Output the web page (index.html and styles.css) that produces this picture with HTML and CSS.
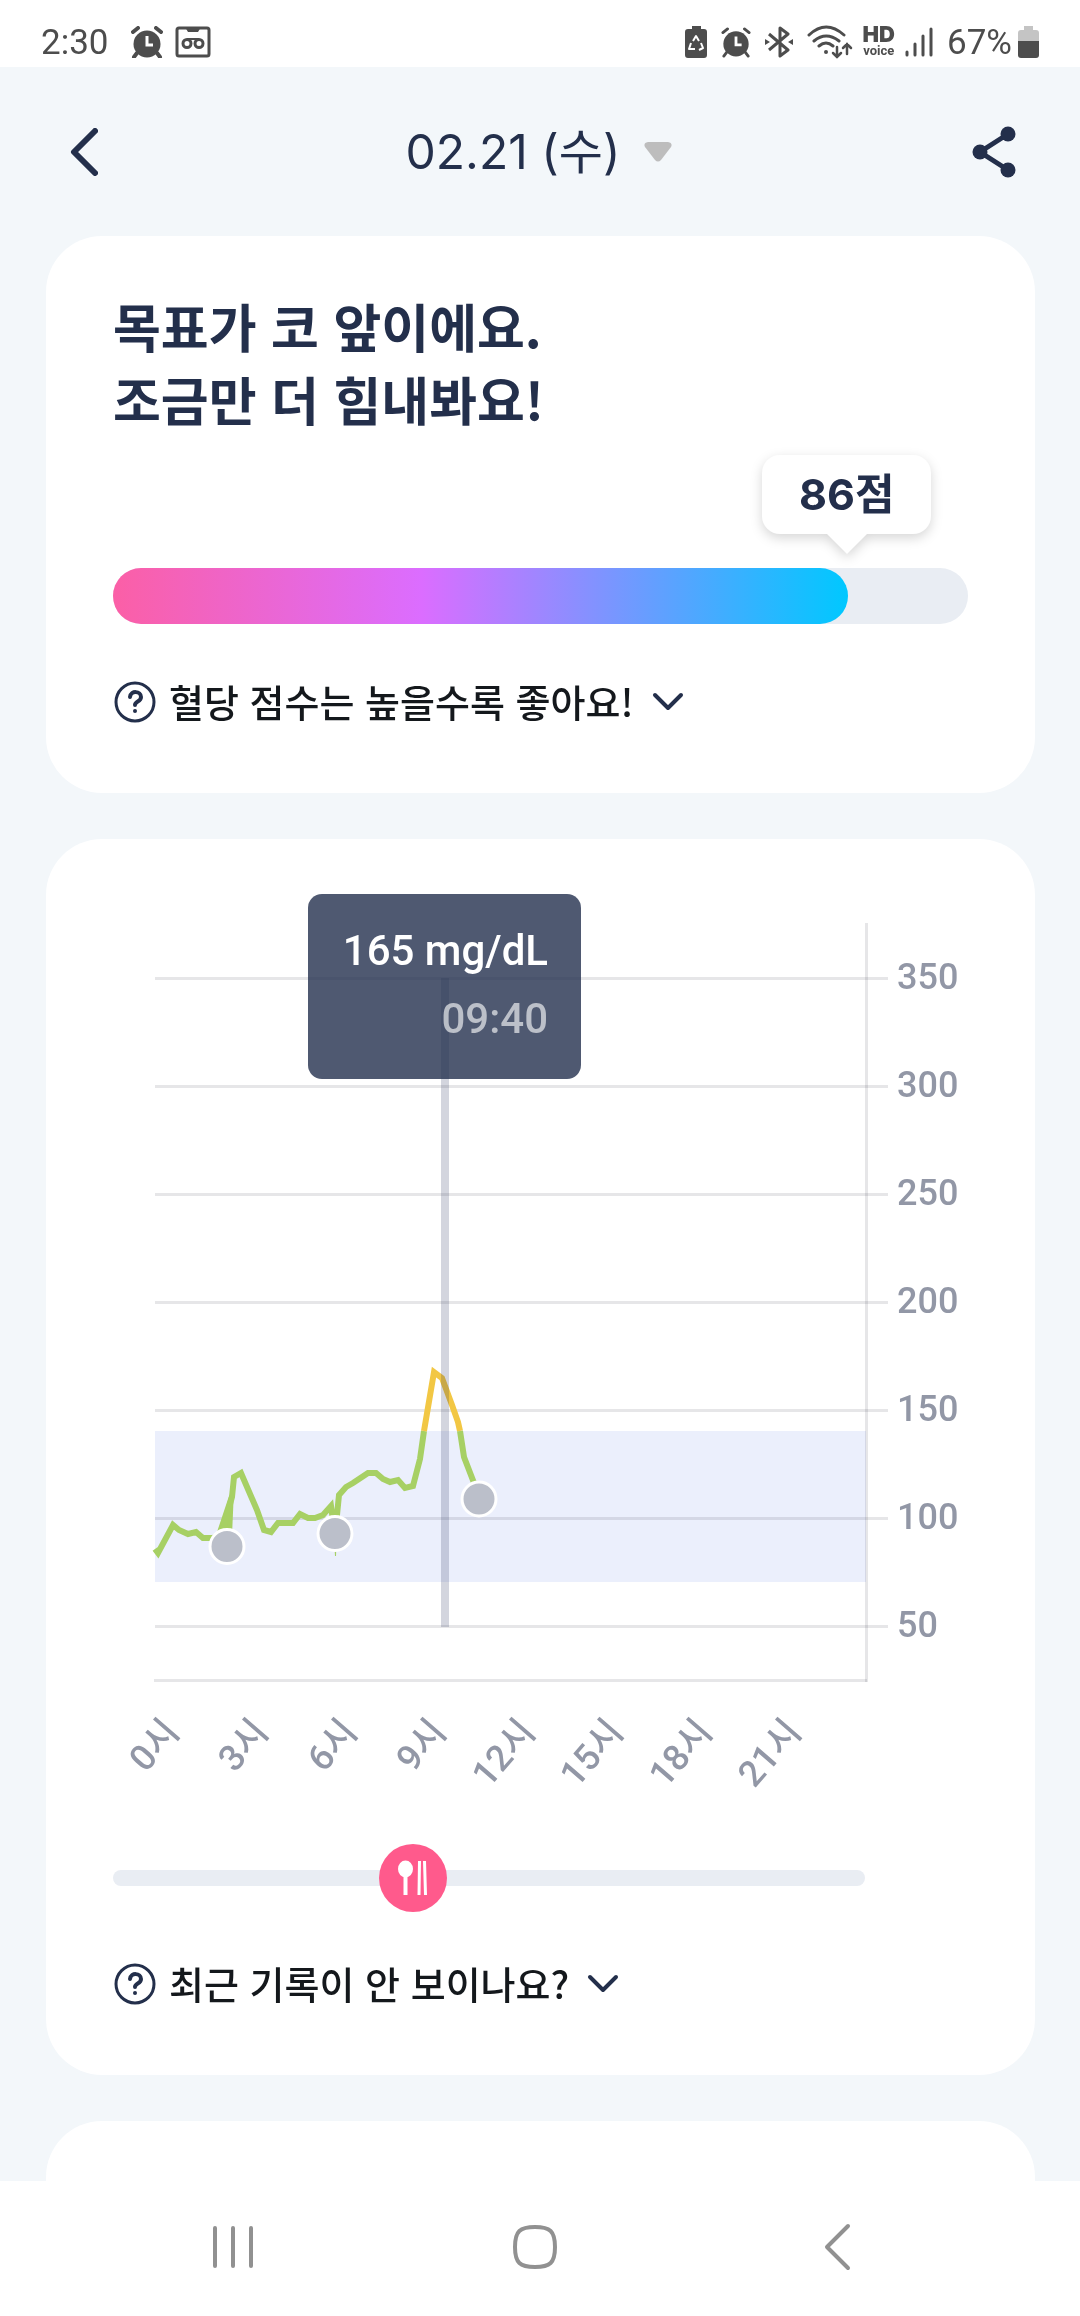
FILE: index.html
```html
<!DOCTYPE html>
<html lang="ko">
<head>
  <meta charset="UTF-8">
  <meta name="viewport" content="width=device-width, initial-scale=1">
  <title>혈당 리포트</title>
  <link rel="stylesheet" href="styles.css">
</head>
<body>

  <div class="status">
    <span class="time">2:30</span>
    <svg class="alarm" width="32" height="32" viewBox="0 0 32 32">
      <circle cx="16" cy="18" r="13.5" fill="#4d4d4d"/>
      <path d="M2 6l5-4M30 6l-5-4M6 27l-3 4M26 27l3 4" stroke="#4d4d4d" stroke-width="4" stroke-linecap="round"/>
      <path d="M16 10v9h6" stroke="#fff" stroke-width="3" fill="none"/>
    </svg>
    <svg width="36" height="32" viewBox="0 0 36 32" fill="none" stroke="#4d4d4d">
      <rect x="2" y="2" width="32" height="28" rx="2" stroke-width="3"/>
      <path d="M10 1h16l-3 5H13z" fill="#4d4d4d" stroke="none"/>
      <circle cx="12" cy="17.500" r="4" stroke-width="3"/>
      <circle cx="24" cy="17.500" r="4" stroke-width="3"/>
      <path d="M12 13h12" stroke-width="2"/>
    </svg>
    <div class="status-right">
      <svg width="22" height="32" viewBox="0 0 22 32">
        <path d="M7 0h9v3h3q3 0 3 3v23q0 3-3 3H3q-3 0-3-3V6q0-3 3-3h4z" fill="#4d4d4d"/>
        <path d="M8 15l3-5 3 5M16 17l2 5-4 2M10 23H4l2-6" stroke="#fff" stroke-width="2" fill="none" stroke-linejoin="round"/>
      </svg>
      <svg width="30" height="32" viewBox="0 0 32 32">
        <circle cx="16" cy="18" r="13.500" fill="#4d4d4d"/>
        <path d="M2 6l5-4M30 6l-5-4M6 27l-3 4M26 27l3 4" stroke="#4d4d4d" stroke-width="3" stroke-linecap="round"/>
        <path d="M16 10v9h6" stroke="#fff" stroke-width="3" fill="none"/>
      </svg>
      <svg width="28" height="32" viewBox="0 0 28 32" fill="none" stroke="#4d4d4d" stroke-width="3" stroke-linejoin="round">
        <path d="M4 8l19 16-8 6V2l8 6L4 24"/>
        <path d="M0 13l5 3-5 3zM28 13l-5 3 5 3z" fill="#4d4d4d" stroke="none"/>
      </svg>
      <svg width="46" height="34" viewBox="0 0 46 34" fill="none" stroke="#4d4d4d" stroke-width="3" stroke-linecap="round">
        <path d="M2 10Q19-6 37 10M7 16q12-10 25 0M12 21q7-6 14 0"/>
        <circle cx="19" cy="27" r="2" fill="#4d4d4d" stroke="none"/>
        <path d="M30 22v10m-4-4l4 4 4-4M40 29V19m-4 4l4-4 4 4" stroke-width="2.500"/>
      </svg>
      <div class="hd"><b>HD</b><span>voice</span></div>
      <svg class="signal" width="28" height="30" viewBox="0 0 28 30" stroke="#4d4d4d" stroke-width="3" stroke-linecap="round">
        <path d="M2 25v3M10 17v11M18 9v19M26 2v26"/>
      </svg>
      <span class="percent">67%</span>
      <svg width="21" height="32" viewBox="0 0 21 32">
        <path d="M6 0h9v4h3q3 0 3 3v8H0V7q0-3 3-3h3z" fill="#c4c4c4"/>
        <path d="M0 15h21v14q0 3-3 3H3q-3 0-3-3z" fill="#4d4d4d"/>
      </svg>
    </div>
  </div>

  <header class="header">
    <button aria-label="뒤로">
      <svg width="28" height="48" viewBox="0 0 28 48"><path d="M25 3L4 24l21 21" fill="none" stroke="#232f4b" stroke-width="6" stroke-linecap="round" stroke-linejoin="round"/></svg>
    </button>
    <button class="date">
      <span>02.21 (수)</span>
      <svg width="28" height="22" viewBox="0 0 28 22"><path d="M4 1h20q5 1 3 5L17 19q-3 3-6 0L1 6Q-1 2 4 1z" fill="#bdbdbd"/></svg>
    </button>
    <button aria-label="공유">
      <svg width="44" height="52" viewBox="0 0 44 52" fill="#232f4b">
        <path d="M36 8L8 26l28 18" fill="none" stroke="#232f4b" stroke-width="5"/>
        <circle cx="8" cy="26" r="7.500"/><circle cx="36" cy="8" r="7.500"/><circle cx="36" cy="44" r="7.500"/>
      </svg>
    </button>
  </header>

  <main class="content">
    <section class="card">
      <h1>목표가 코 앞이에요.<br>조금만 더 힘내봐요!</h1>
      <div class="score">
        <div class="bubble" style="left: 86%">86점</div>
        <div class="bar"><div class="fill" style="width: 86%"></div></div>
      </div>
      <button class="help">
        <svg width="44" height="44" viewBox="0 0 44 44" fill="none" stroke="#232f4b" stroke-width="3" stroke-linecap="round">
          <circle cx="22" cy="22" r="19"/>
          <path d="M17 17c1-7 11-6 11 0 0 5-6 4-6 8" stroke-width="4"/>
          <circle cx="22" cy="31" r="2" fill="#232f4b" stroke="none"/>
        </svg>
        <span>혈당 점수는 높을수록 좋아요!</span>
        <svg class="chevron" width="32" height="20" viewBox="0 0 32 20"><path d="M3 3l13 13L29 3" fill="none" stroke="#232f4b" stroke-width="4" stroke-linecap="round" stroke-linejoin="round"/></svg>
      </button>
    </section>

    <section class="card">
      <svg class="chart" viewBox="0 0 855 950">
        <rect x="42" y="537" width="711" height="151" fill="#ebeffc"/>
        <g class="grid">
          <path d="M42 84.500h733M42 192.500h733M42 300.500h733M42 408.500h733M42 516.500h733M42 624.500h733M42 732.500h733M41 786.500h713"/>
          <path d="M753.500 29v759"/>
        </g>
        <g class="y-labels">
          <text x="784" y="95">350</text>
          <text x="784" y="203">300</text>
          <text x="784" y="311">250</text>
          <text x="784" y="419">200</text>
          <text x="784" y="527">150</text>
          <text x="784" y="635">100</text>
          <text x="784" y="743">50</text>
        </g>
        <g class="x-labels">
          <text transform="translate(68 839) rotate(-49)">0시</text>
          <text transform="translate(157 839) rotate(-49)">3시</text>
          <text transform="translate(246 839) rotate(-49)">6시</text>
          <text transform="translate(335 839) rotate(-49)">9시</text>
          <text transform="translate(424 839) rotate(-49)">12시</text>
          <text transform="translate(512 839) rotate(-49)">15시</text>
          <text transform="translate(601 839) rotate(-49)">18시</text>
          <text transform="translate(690 839) rotate(-49)">21시</text>
        </g>

        <path d="M104 638L116 602L121 595L119 642z" fill="#a7d064"/>
        <polyline class="line" points="42,655 45,659 60,631 66,636 75,640 83,638 90,644 99,644 108,643 119,603 121,583 128,579 144,616 151,636 158,638 165,629 180,629 187,620 195,624 202,624 210,621 218,612 222,641 226,601 233,593 240,589 249,583 255,579 263,579 270,585 277,588 285,586 292,594 300,592 307,565 311,537"/>
        <polyline class="line high" points="311,537 321,478 329,484 339,511 345,528 347,537"/>
        <polyline class="line" points="347,537 351,563 361,589 366,605"/>
        <path d="M220 630h4l-1 32h-1z" fill="#a7d064"/>
        <g class="markers">
          <circle cx="114" cy="652.500" r="17"/>
          <circle cx="222" cy="639.500" r="17"/>
          <circle cx="366" cy="605" r="17"/>
        </g>

        <rect x="328" y="84" width="8" height="649" fill="#232f5a" fill-opacity=".2"/>
        <rect x="195" width="273" height="185" rx="14" fill="#232f4d" fill-opacity=".8"/>
        <g class="tip">
          <text x="435" y="71">165 mg/dL</text>
          <text x="435" y="139" fill-opacity=".62">09:40</text>
        </g>
      </svg>

      <div class="meals">
        <button class="meal" style="left: 40%" aria-label="식사">
          <svg width="30" height="36" viewBox="0 0 30 36" fill="#fff">
            <ellipse cx="7.500" cy="9" rx="7.500" ry="8.500"/>
            <path d="M5.500 15h4v20h-4zM20 1h3l-.5 34h-3zM25 1h3l1 34h-3z"/>
          </svg>
        </button>
      </div>

      <button class="help">
        <svg width="44" height="44" viewBox="0 0 44 44" fill="none" stroke="#232f4b" stroke-width="3" stroke-linecap="round">
          <circle cx="22" cy="22" r="19"/>
          <path d="M17 17c1-7 11-6 11 0 0 5-6 4-6 8" stroke-width="4"/>
          <circle cx="22" cy="31" r="2" fill="#232f4b" stroke="none"/>
        </svg>
        <span>최근 기록이 안 보이나요?</span>
        <svg class="chevron" width="32" height="20" viewBox="0 0 32 20"><path d="M3 3l13 13L29 3" fill="none" stroke="#232f4b" stroke-width="4" stroke-linecap="round" stroke-linejoin="round"/></svg>
      </button>
    </section>

    <section class="card"></section>
  </main>

  <nav class="nav">
    <button aria-label="최근 앱">
      <svg width="42" height="46" viewBox="0 0 42 46"><path d="M3 4v38M21 4v38M39 4v38"/></svg>
    </button>
    <button aria-label="홈">
      <svg width="46" height="46" viewBox="0 0 46 46"><path d="M23 3c15 0 20 4 20 20s-5 20-20 20S3 39 3 23 8 3 23 3z"/></svg>
    </button>
    <button aria-label="뒤로 가기">
      <svg width="28" height="48" viewBox="0 0 28 48"><path d="M25 3L4 24l21 21"/></svg>
    </button>
  </nav>

</body>
</html>
```

FILE: styles.css
```css
* {
  box-sizing: border-box;
}
body {
  margin: 0;
  height: 100vh;
  display: flex;
  flex-direction: column;
  background: #f3f7fa;
  color: #232f4b;
  font-family: Inter, "Noto Sans CJK KR", sans-serif;
}
button {
  border: 0;
  padding: 0;
  background: none;
  color: inherit;
  font: inherit;
  cursor: pointer;
}
svg {
  display: block;
}

/* status bar */
.status {
  display: flex;
  align-items: center;
  height: 67px;
  padding: 17px 41px 0;
  background: #fff;
  color: #4d4d4d;
  font-family: Roboto, sans-serif;
  font-size: 35px;
}
.time {
  margin-right: 22px;
}
.alarm {
  margin-right: 12px;
}
.status-right {
  display: flex;
  align-items: center;
  gap: 14px;
  margin-left: auto;
}
.hd {
  display: flex;
  flex-direction: column;
  align-items: center;
  margin: 0 -4px;
  font-weight: 700;
}
.hd b {
  font-family: Inter, sans-serif;
  font-size: 22px;
  line-height: 18px;
}
.hd span {
  font-size: 13px;
  line-height: 16px;
}
.percent {
  margin-right: -8px;
}

/* header */
.header {
  display: flex;
  justify-content: space-between;
  align-items: center;
  height: 169px;
  padding: 0 64px 0 70px;
}
.date {
  display: flex;
  align-items: center;
  gap: 24px;
  padding-left: 8px;
  font-size: 48px;
}
.date span {
  padding-bottom: 8px;
}

/* cards */
.content {
  flex: 1;
  min-height: 0;
  overflow: hidden;
  padding: 0 45px 0 46px;
}
.card {
  min-height: 200px;
  margin-bottom: 46px;
  padding: 55px 67px 61px;
  border-radius: 56px;
  background: #fff;
}
h1 {
  margin: -2px 0 2px;
  font-family: "Noto Sans CJK KR", sans-serif;
  font-size: 52px;
  line-height: 73px;
  font-weight: 700;
}
.score {
  position: relative;
  padding-top: 131px;
}
.bubble {
  position: absolute;
  top: 18px;
  width: 169px;
  margin-left: -86px;
  border-radius: 18px;
  background: #fff;
  filter: drop-shadow(0 4px 6px rgba(0, 0, 0, 0.16));
  text-align: center;
  font-size: 43px;
  line-height: 79px;
  font-weight: 700;
}
.bubble::after {
  content: "";
  position: absolute;
  top: 100%;
  left: 50%;
  margin-left: -20px;
  border: 20px solid transparent;
  border-top-color: #fff;
  border-bottom: 0;
}
.bar {
  height: 56px;
  border-radius: 28px;
  background: #e9edf3;
}
.fill {
  height: 100%;
  border-radius: 28px;
  background: linear-gradient(90deg, #fb5fa6, #db6dff 42%, #00c8ff);
}
.help {
  display: flex;
  align-items: center;
  height: 60px;
  margin-top: 48px;
  color: #14181c;
  font-family: "Noto Sans CJK KR", sans-serif;
  font-size: 38px;
  font-weight: 500;
}
.help span {
  margin-left: 12px;
  padding-bottom: 4px;
}
.chevron {
  margin-left: 18px;
}

/* chart */
.chart {
  width: 100%;
  font-family: Roboto, "Noto Sans CJK KR", sans-serif;
  font-size: 36px;
  font-weight: 500;
}
.grid {
  stroke: #e6e6e8;
  stroke-width: 3;
}
.grid path {
  mix-blend-mode: multiply;
}
.y-labels,
.x-labels {
  fill: #9297a6;
}
.x-labels {
  text-anchor: end;
}
.line {
  fill: none;
  stroke: #a7d064;
  stroke-width: 6;
}
.high {
  stroke: #f2c744;
}
.markers {
  fill: #bbbfca;
  stroke: #fff;
  stroke-width: 3;
}
.tip {
  fill: #fff;
  font-size: 42px;
  text-anchor: end;
}

/* meal timeline */
.meals {
  position: relative;
  width: 88%;
  height: 16px;
  margin: 26px 0 68px;
  border-radius: 8px;
  background: #e9edf3;
}
.meal {
  position: absolute;
  top: -26px;
  width: 68px;
  height: 68px;
  margin-left: -35px;
  border-radius: 50%;
  background: #ff5a8c;
}
.meal svg {
  margin: auto;
}

/* system navigation */
.nav {
  display: grid;
  grid-template-columns: repeat(3, 1fr);
  height: 135px;
  padding: 0 92px 4px 82px;
  background: #fff;
}
.nav svg {
  margin: auto;
  fill: none;
  stroke: #919191;
  stroke-width: 4;
  stroke-linecap: round;
  stroke-linejoin: round;
}
```
